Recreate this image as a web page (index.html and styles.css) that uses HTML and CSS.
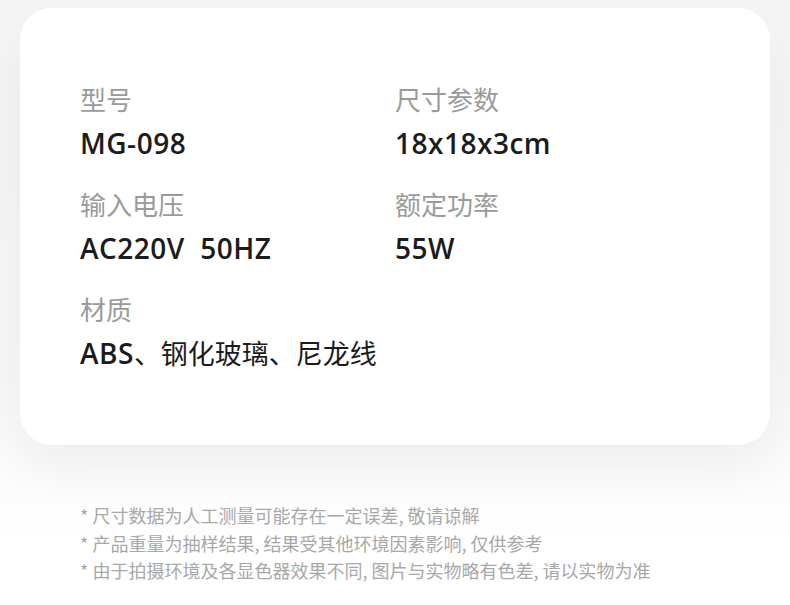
FILE: index.html
```html
<!DOCTYPE html>
<html>
<head>
    <meta charset="UTF-8">
    <meta name="viewport" content="width=device-width, initial-scale=1.0">
    <title>产品参数</title>
    <link rel="stylesheet" href="styles.css">
</head>
<body>
    <div class="wrap">
        <div class="card">
            <div class="item">
                <p class="label">型号</p>
                <p class="value">MG-098</p>
            </div>
            <div class="item">
                <p class="label">尺寸参数</p>
                <p class="value">18x18x3cm</p>
            </div>
            <div class="item">
                <p class="label">输入电压</p>
                <p class="value">AC220V&nbsp; 50HZ</p>
            </div>
            <div class="item">
                <p class="label">额定功率</p>
                <p class="value">55W</p>
            </div>
            <div class="item">
                <p class="label">材质</p>
                <p class="value">ABS<span class="cn">、钢化玻璃、尼龙线</span></p>
            </div>
        </div>

        <ul class="notes">
            <li>* 尺寸数据为人工测量可能存在一定误差, 敬请谅解</li>
            <li>* 产品重量为抽样结果, 结果受其他环境因素影响, 仅供参考</li>
            <li>* 由于拍摄环境及各显色器效果不同, 图片与实物略有色差, 请以实物为准</li>
        </ul>
    </div>
</body>
</html>
```

FILE: styles.css
```css
*{ margin: 0; padding: 0; box-sizing: border-box; }
body{ width: 790px; height: 605px; overflow: hidden; background: linear-gradient(#f4f4f4 0, #f6f6f6 60%, #ffffff 90%); font-family: "Noto Sans CJK SC", sans-serif; }
.wrap{ padding: 8px 20px 0; }
.card{ height: 437px; background: #fff; border-radius: 32px; box-shadow: 0 24px 50px rgba(0,0,0,0.05); padding: 76px 0 0 60px; display: grid; grid-template-columns: 315px 1fr; row-gap: 28px; align-content: start; }
.label{ font-size: 26px; line-height: 30px; color: #9a9a9a; }
.value{ margin-top: 12px; margin-bottom: 1px; font-family: "Open Sans", "Noto Sans CJK SC", sans-serif; font-size: 28px; line-height: 34px; font-weight: 600; letter-spacing: 0.5px; color: #1c1c1c; }
.value .cn{ font-family: "Noto Sans CJK SC", sans-serif; font-weight: 400; font-size: 27px; letter-spacing: 0; }
.notes{ list-style: none; padding: 57px 0 0 60px; }
.notes li{ font-size: 18px; line-height: 27.5px; color: #a8a8a8; }
```
